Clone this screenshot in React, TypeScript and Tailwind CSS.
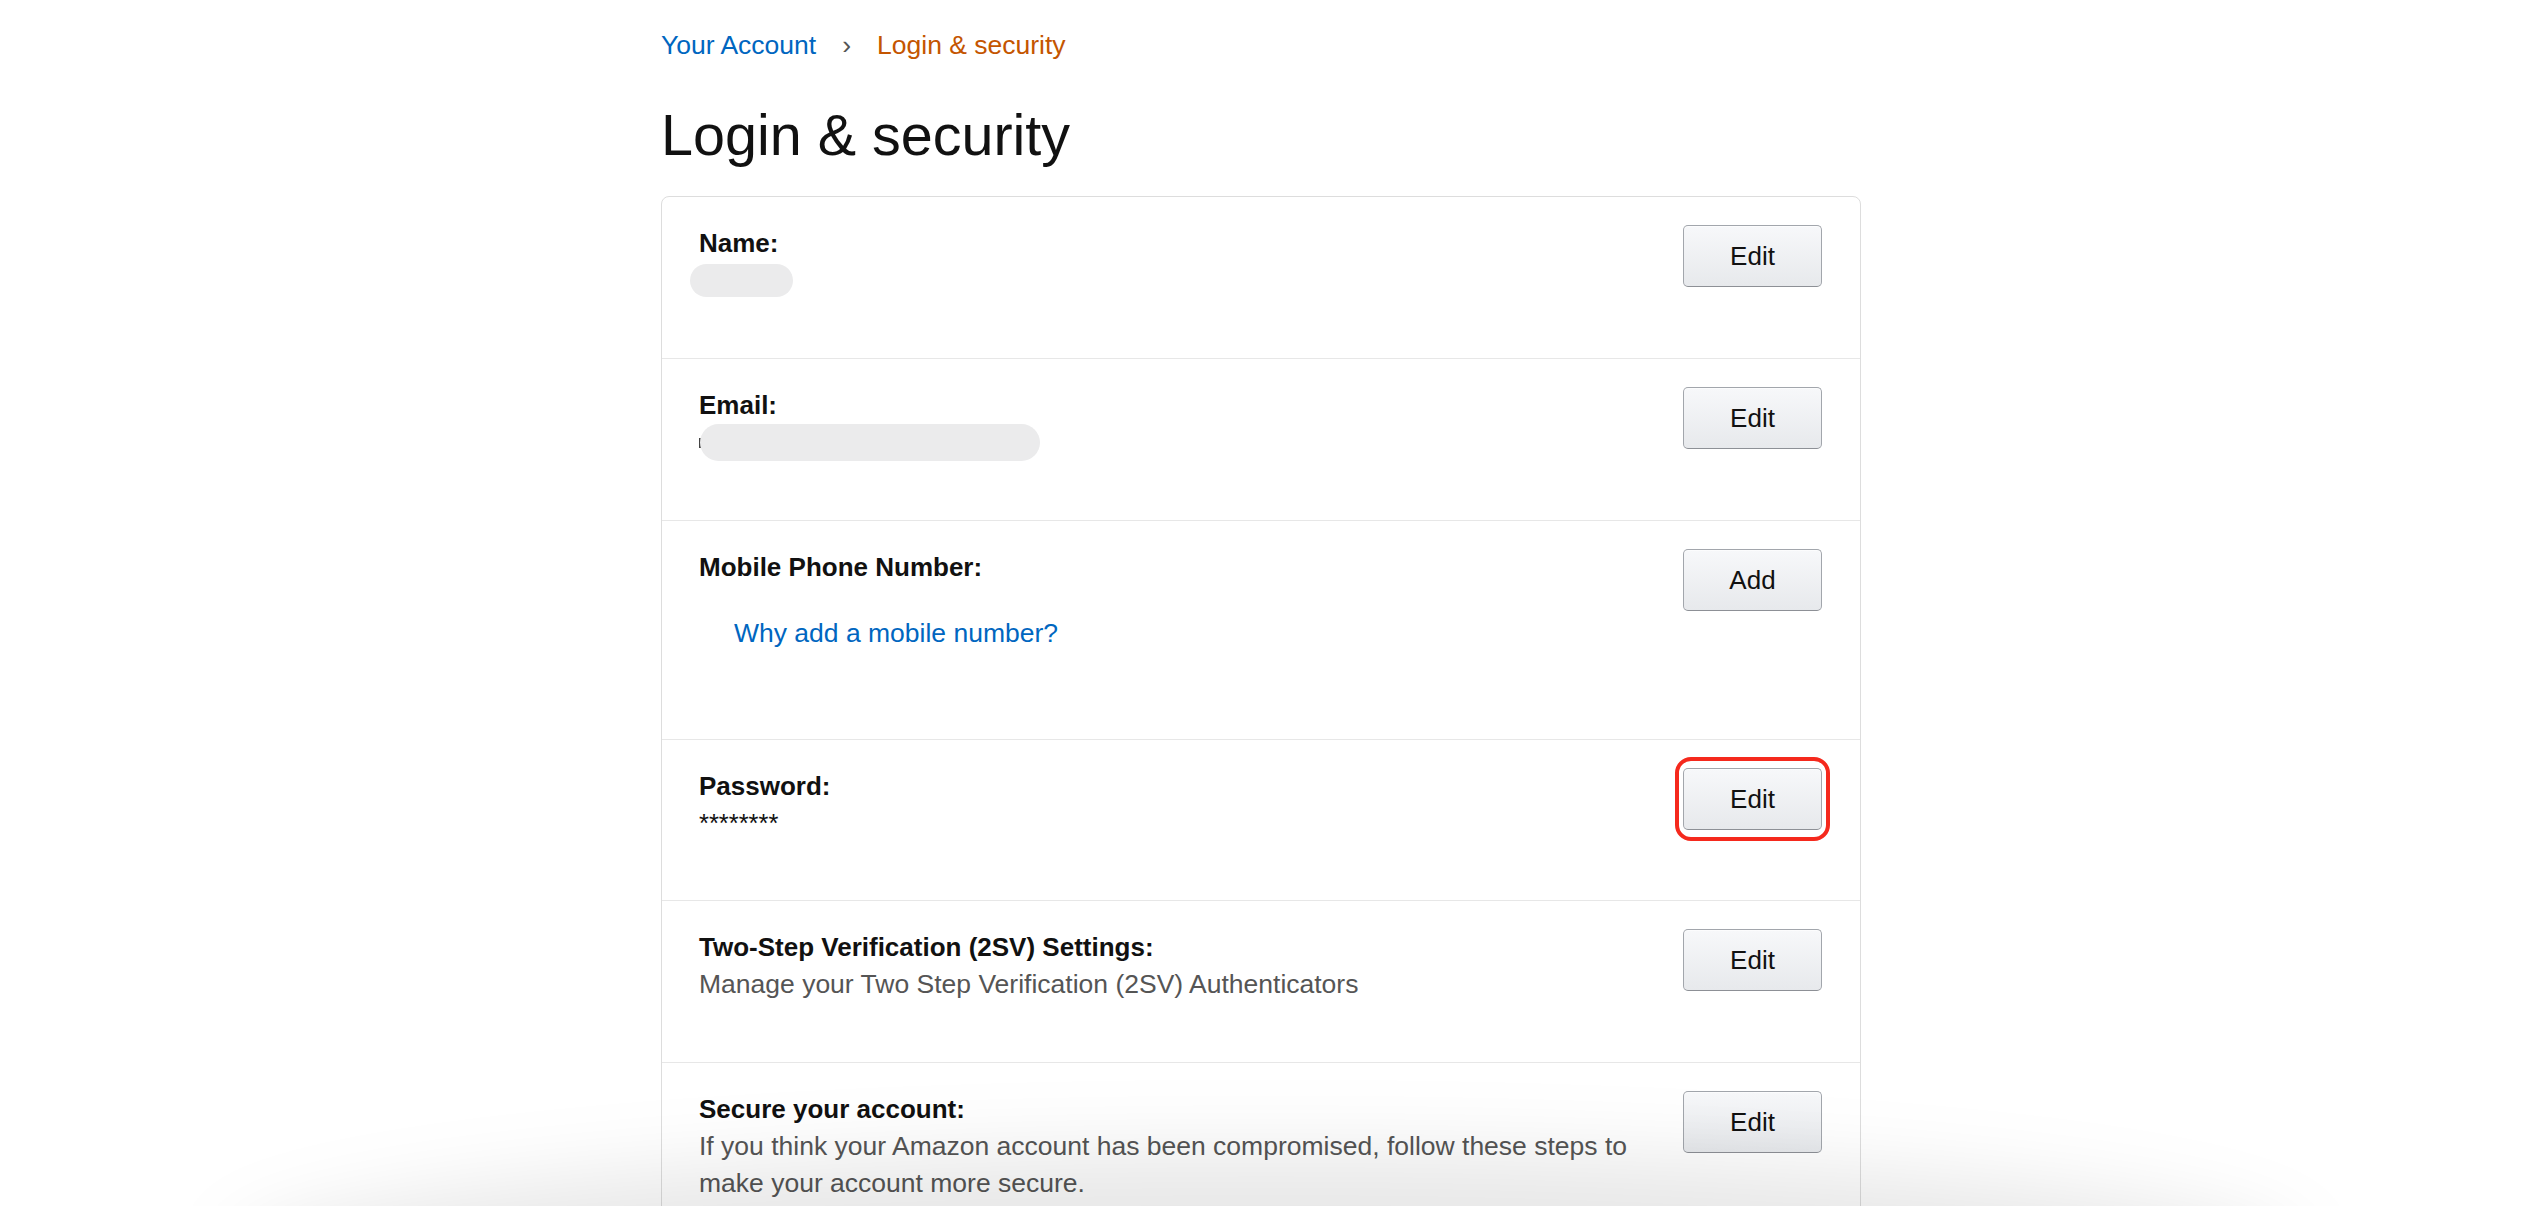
import type { ReactNode } from "react";

const font = { fontFamily: '"Liberation Sans", Arial, sans-serif' };

interface SettingRow {
  label: string;
  height?: string;
  action: string;
  highlight?: boolean;
  body: ReactNode;
}

function EditButton({ children, highlight = false }: { children: ReactNode; highlight?: boolean }) {
  return (
    <div className="relative shrink-0">
      {highlight ? (
        <span className="pointer-events-none absolute -bottom-[11px] -left-[8px] -right-[8px] -top-[11px] rounded-[16px] border-[4px] border-[#f5291d]" />
      ) : null}
      <button
        type="button"
        className="flex h-[62px] w-[139px] items-center justify-center rounded-[5px] border border-[#a2a6ac] border-b-[#8d9096] bg-gradient-to-b from-[#f7f8fa] to-[#e7e9ec] text-[26px] leading-[37px] text-[#111] shadow-[inset_0_1px_0_rgba(255,255,255,0.6)]"
      >
        {children}
      </button>
    </div>
  );
}

const rows: SettingRow[] = [
  {
    label: "Name:",
    height: "h-[161px]",
    action: "Edit",
    body: (
      <div className="flex h-[37px] items-center">
        <span className="-ml-[9px] block h-[33px] w-[103px] rounded-full bg-[#ebebec]" />
      </div>
    ),
  },
  {
    label: "Email:",
    height: "h-[162px]",
    action: "Edit",
    body: (
      <div className="flex h-[37px] items-center">
        <span className="block h-[10px] w-[2px] bg-[#444]" />
        <span className="-ml-[1px] block h-[37px] w-[340px] rounded-full bg-[#ebebec]" />
      </div>
    ),
  },
  {
    label: "Mobile Phone Number:",
    height: "h-[219px]",
    action: "Add",
    body: (
      <a href="#" className="mt-[29px] block pl-[35px] text-[26.5px] leading-[37px] text-[#0066c0]">
        Why add a mobile number?
      </a>
    ),
  },
  {
    label: "Password:",
    height: "h-[161px]",
    action: "Edit",
    highlight: true,
    body: <p className="text-[25.5px] leading-[37px] text-[#111]">********</p>,
  },
  {
    label: "Two-Step Verification (2SV) Settings:",
    height: "h-[162px]",
    action: "Edit",
    body: <p className="text-[26.5px] leading-[37px] text-[#555]">Manage your Two Step Verification (2SV) Authenticators</p>,
  },
  {
    label: "Secure your account:",
    height: "h-[162px]",
    action: "Edit",
    body: (
      <p className="text-[26.5px] leading-[37px] text-[#555]">
        If you think your Amazon account has been compromised, follow these steps to make your account more secure.
      </p>
    ),
  },
];

export default function App() {
  return (
    <div className="relative h-[1206px] overflow-hidden bg-white" style={font}>
      <main className="mx-auto w-[1200px] pt-[27px]">
        <nav className="flex items-center text-[26.5px] leading-[37px]">
          <a href="#" className="text-[#0066c0]">
            Your Account
          </a>
          <span className="mx-[26px] text-[#555]">›</span>
          <span className="text-[#c45500]">Login &amp; security</span>
        </nav>

        <h1 className="mt-[38px] text-[57.5px] font-normal leading-[67px] text-[#111]">Login &amp; security</h1>

        <section className="mt-[27px] rounded-t-[8px] border border-[#dddddd]">
          {rows.map((row, index) => (
            <div
              key={row.label}
              className={`flex items-start pl-[37px] pr-[38px] pt-[28px] ${row.height ?? ""} ${index > 0 ? "border-t border-[#e7e7e7]" : ""}`}
            >
              <div className="min-w-0 flex-1 pr-[23px]">
                <h2 className="text-[26px] font-bold leading-[37px] text-[#111]">{row.label}</h2>
                {row.body}
              </div>
              <EditButton highlight={row.highlight}>{row.action}</EditButton>
            </div>
          ))}
        </section>
      </main>

      {/* soft grey shade at the bottom of the capture */}
      <div className="pointer-events-none absolute left-[230px] right-[220px] top-[1150px] h-[220px] rounded-[50%] bg-black/[0.09] blur-[38px]" />
    </div>
  );
}
